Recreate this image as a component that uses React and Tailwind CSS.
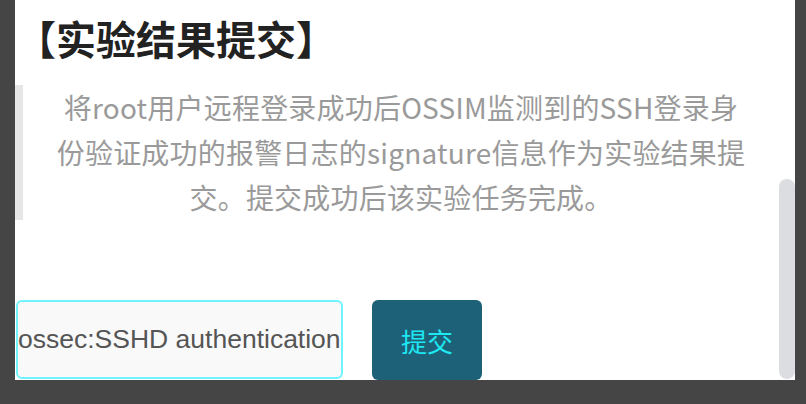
import { useState } from "react";

export default function App() {
  const [answer, setAnswer] = useState("ossec:SSHD authentication");

  return (
    <div className="w-[806px] h-[404px] bg-[#454545] overflow-hidden font-['Noto_Sans_CJK_SC',sans-serif]">
      <div className="ml-[15px] w-[780px] h-[380px] bg-white flex overflow-hidden">
        {/* content */}
        <div className="w-[764px] flex flex-col">
          <h2 className="pl-[1px] pt-[13px] h-[85px] text-[40px] leading-[50px] font-bold text-[#222] font-['Noto_Sans_CJK_SC',sans-serif]">
            【实验结果提交】
          </h2>

          <blockquote className="h-[135px] border-l-8 border-[#e6e6e6] text-center text-[28px] tracking-[0.2px] leading-[45px] text-[#9a9a9a] font-['Noto_Sans_CJK_SC',sans-serif]">
            将root用户远程登录成功后OSSIM监测到的SSH登录身
            <br />
            份验证成功的报警日志的signature信息作为实验结果提
            <br />
            交。提交成功后该实验任务完成。
          </blockquote>

          <div className="mt-[80px] flex items-start gap-[29px]">
            <input
              value={answer}
              onChange={(e) => setAnswer(e.target.value)}
              className="ml-[1px] w-[327px] h-[79px] pl-0 pr-0 border-2 border-[#6ef3ff] rounded-[6px] bg-[#f9f9f9] text-[#555] text-[26.5px] outline-none font-['Liberation_Sans',Arial,sans-serif]"
            />
            <button className="w-[110px] h-[80px] rounded-[6px] bg-[#1d6179] text-[#1ee8f2] text-[26px] font-['Noto_Sans_CJK_SC',sans-serif]">
              提交
            </button>
          </div>
        </div>

        {/* scrollbar */}
        <div className="w-[16px] h-[380px]">
          <div className="mt-[179px] h-[200px] rounded-full bg-[#dcdde0]" />
        </div>
      </div>
    </div>
  );
}
